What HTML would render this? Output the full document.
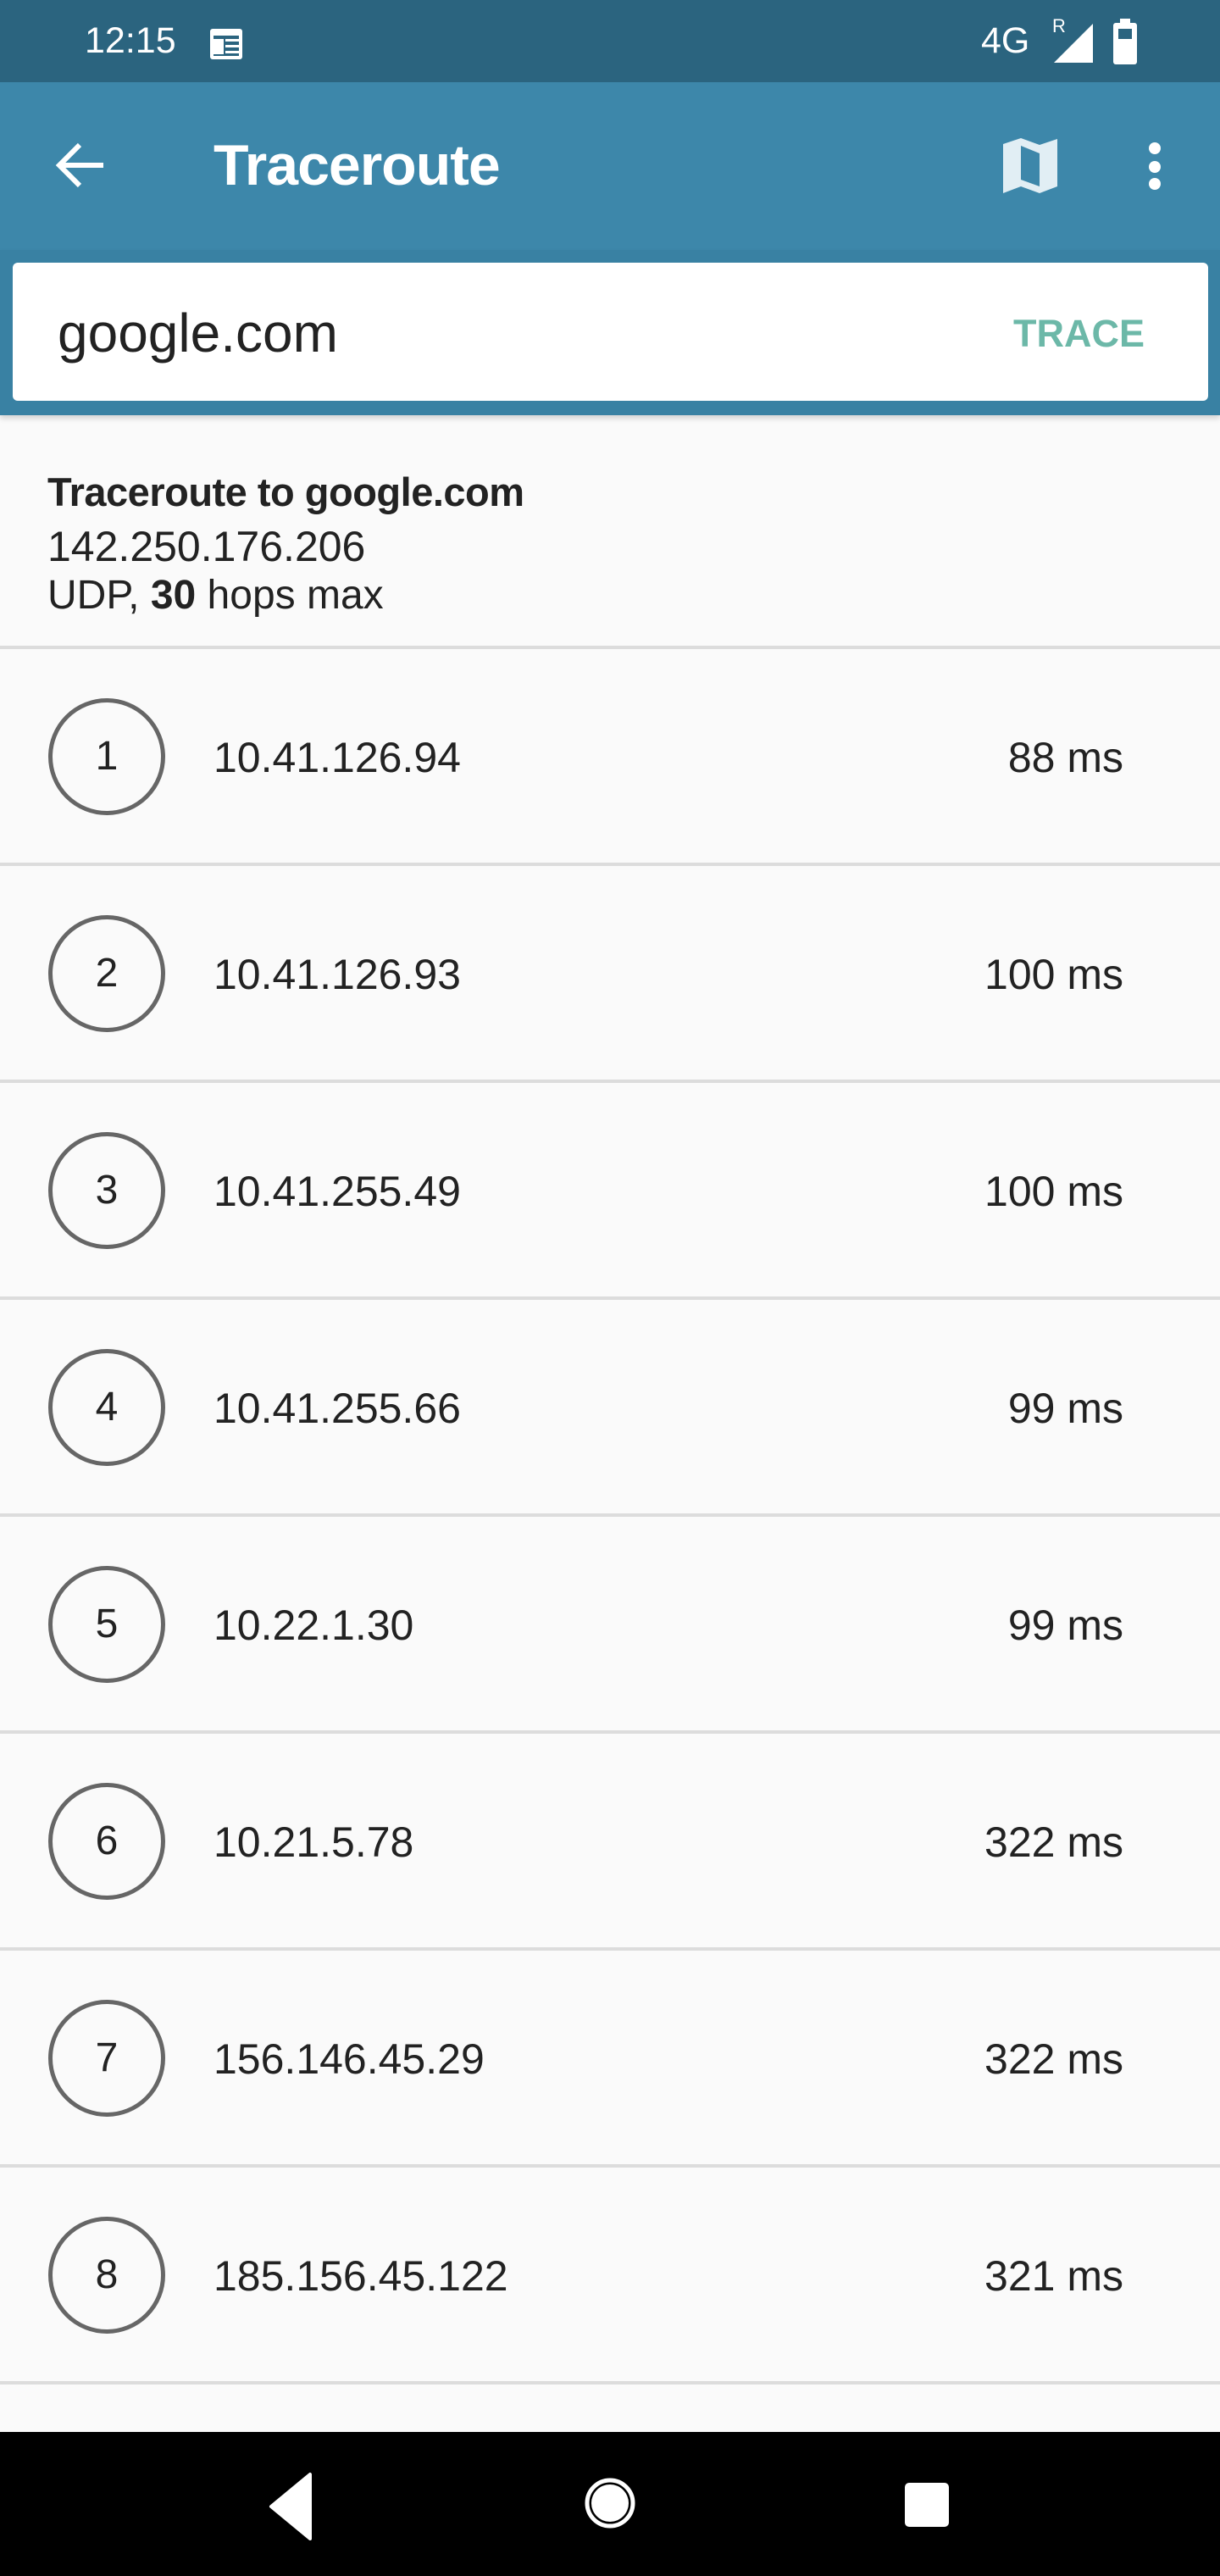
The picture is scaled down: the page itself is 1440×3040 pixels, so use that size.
<!DOCTYPE html>
<html style="overflow:hidden;height:3040px"><head><meta charset="utf-8"><style>
*{margin:0;padding:0;box-sizing:border-box}
body{width:1440px;height:3040px;background:#fafafa;font-family:"Liberation Sans",sans-serif;position:relative;overflow:hidden;color:#222}
.abs{position:absolute}
#status{left:0;top:0;width:1440px;height:97px;background:#2b647f}
#appbar{left:0;top:97px;width:1440px;height:393px;background:#3d87aa}
#appbar2{left:0;top:295px;width:1440px;height:195px;background:#3981a3;box-shadow:0 4px 6px rgba(0,0,0,.15)}
#card{left:15px;top:310px;width:1411px;height:163px;background:#fff;border-radius:6px}
.row{position:absolute;left:0;width:1440px;height:256px;border-bottom:4px solid #dcdcdc}
.circ{position:absolute;left:57px;top:58px;width:138px;height:138px;border:5px solid #666;border-radius:50%;text-align:center;line-height:128px;font-size:48px;color:#222}
.ip{position:absolute;left:252px;top:98px;font-size:50px;line-height:60px;color:#222}
.ms{position:absolute;right:114px;top:98px;font-size:50px;line-height:60px;color:#222;text-align:right}
</style></head><body>
<div id="status" class="abs"></div>
<div class="abs" style="left:100px;top:24px;font-size:43px;color:#fff">12:15</div>
<svg class="abs" style="left:246px;top:28px" width="44" height="44" viewBox="0 0 44 44"><rect x="2" y="6" width="38" height="36" rx="3" fill="#fff"/><rect x="6" y="14" width="30" height="24" fill="#2b647f"/><rect x="6" y="18" width="12" height="18" fill="#fff"/><rect x="20" y="18" width="16" height="3" fill="#fff"/><rect x="20" y="25" width="16" height="3" fill="#fff"/><rect x="20" y="32" width="16" height="3" fill="#fff"/></svg>
<div class="abs" style="left:1158px;top:24px;font-size:43px;color:#fff">4G</div>
<div class="abs" style="left:1242px;top:18px;font-size:22px;color:#fff">R</div>
<svg class="abs" style="left:1244px;top:28px" width="46" height="46"><polygon points="46,0 46,46 0,46" fill="#fff"/></svg>
<svg class="abs" style="left:1314px;top:22px" width="28" height="54"><rect x="8" y="0" width="12" height="6" fill="#fff"/><rect x="0" y="5" width="28" height="49" rx="3" fill="#fff"/><rect x="6" y="12" width="16" height="12" fill="#2b647f"/></svg>
<div id="appbar" class="abs"></div>
<div id="appbar2" class="abs"></div>
<svg class="abs" style="left:60px;top:160px" width="70" height="70" viewBox="0 0 70 70"><path d="M62 35H12M34 11L10 35l24 24" stroke="#fff" stroke-width="6" fill="none"/></svg>
<div class="abs" style="left:252px;top:156px;font-size:68px;font-weight:bold;color:#fff;letter-spacing:-1px">Traceroute</div>
<svg class="abs" style="left:0;top:0" width="1440" height="300"><path fill="#e1eef4" fill-rule="evenodd" d="M1184 170L1205 163L1227 171L1248 164L1248 220L1227 228L1205 220L1184 228Z M1205 172L1227 181L1227 220L1205 212Z"/><circle cx="1363" cy="175" r="7" fill="#fff"/><circle cx="1363" cy="197" r="7" fill="#fff"/><circle cx="1363" cy="217" r="7" fill="#fff"/></svg>
<div id="card" class="abs"></div>
<div class="abs" style="left:68px;top:356px;font-size:64px;color:#222">google.com</div>
<div class="abs" style="left:1196px;top:368px;font-size:45px;font-weight:bold;color:#6cb8a8">TRACE</div>
<div class="abs" style="left:56px;top:553px;font-size:47px;font-weight:bold;color:#222;letter-spacing:-0.5px">Traceroute to google.com</div>
<div class="abs" style="left:56px;top:616px;font-size:50px;color:#222">142.250.176.206</div>
<div class="abs" style="left:56px;top:675px;font-size:48px;color:#222">UDP, <b>30</b> hops max</div>
<div class="abs" style="left:0;top:762px;width:1440px;height:4px;background:#dcdcdc"></div>
<div class="row" style="top:766px"><div class="circ">1</div><div class="ip">10.41.126.94</div><div class="ms">88 ms</div></div>
<div class="row" style="top:1022px"><div class="circ">2</div><div class="ip">10.41.126.93</div><div class="ms">100 ms</div></div>
<div class="row" style="top:1278px"><div class="circ">3</div><div class="ip">10.41.255.49</div><div class="ms">100 ms</div></div>
<div class="row" style="top:1534px"><div class="circ">4</div><div class="ip">10.41.255.66</div><div class="ms">99 ms</div></div>
<div class="row" style="top:1790px"><div class="circ">5</div><div class="ip">10.22.1.30</div><div class="ms">99 ms</div></div>
<div class="row" style="top:2046px"><div class="circ">6</div><div class="ip">10.21.5.78</div><div class="ms">322 ms</div></div>
<div class="row" style="top:2302px"><div class="circ">7</div><div class="ip">156.146.45.29</div><div class="ms">322 ms</div></div>
<div class="row" style="top:2558px"><div class="circ">8</div><div class="ip">185.156.45.122</div><div class="ms">321 ms</div></div>
<div class="abs" style="left:0;top:2870px;width:1440px;height:170px;background:#000"></div>
<svg class="abs" style="left:0;top:2870px" width="1440" height="170"><path d="M366 50L366 126L320 88Z" fill="#fff" stroke="#fff" stroke-width="4" stroke-linejoin="round"/><circle cx="720" cy="84" r="27" fill="none" stroke="#fff" stroke-width="5"/><circle cx="720" cy="84" r="22" fill="#fff"/><rect x="1068" y="60" width="52" height="52" rx="5" fill="#fff"/></svg>
</body></html>
